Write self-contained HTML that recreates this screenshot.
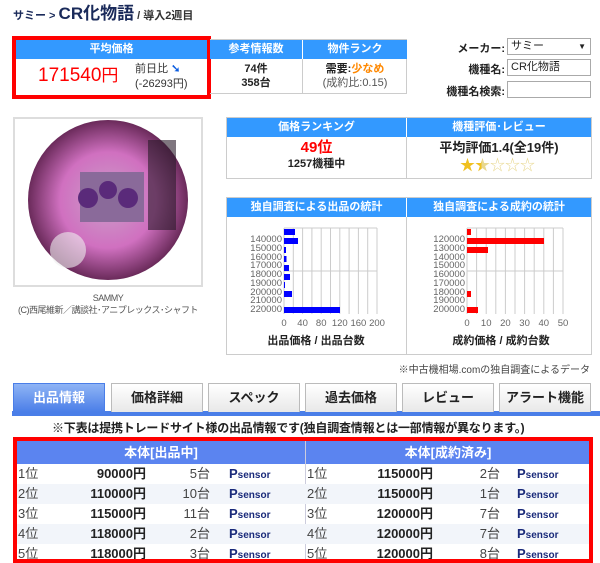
<!DOCTYPE html>
<html><head><meta charset="utf-8"><style>
*{margin:0;padding:0;box-sizing:border-box}
body{width:600px;height:563px;background:#fff;font-family:"Liberation Sans","Noto Sans CJK JP",sans-serif;position:relative;overflow:hidden;color:#222}
.a{position:absolute}
.hd{background:#3399ff;color:#fff;font-weight:bold;font-size:11px;text-align:center;line-height:19px}
.bx{border:1px solid #ccc}
.c{text-align:center}
.lab{position:absolute;font-size:11px;font-weight:bold;text-align:right;width:100px}
.sel{position:absolute;left:507px;width:84px;height:17px;border:1px solid #aaa;font-size:11px;padding-left:3px;line-height:15px;background:#fff}
.tab{position:absolute;top:383px;height:29px;width:92px;border:1px solid #bbb;border-bottom:none;background:linear-gradient(#fff,#e8e8e8);font-size:13px;font-weight:bold;text-align:center;line-height:28px;color:#222}
.row{position:absolute;left:0;width:577px;height:20px;font-size:13px;line-height:20px}
.row span{position:absolute}
.r{color:#444}
.p{font-weight:bold;text-align:right;width:110px}
.n{text-align:right;width:40px;color:#444}
.ps{font-weight:bold;color:#1a2a7a;font-size:13px}
.ps small{font-size:10px}
</style></head><body>
<div class="a" style="left:13px;top:4px;font-size:11px;font-weight:bold;color:#1a2a5a;line-height:20px">サミー &gt; <span style="font-size:17px">CR化物語</span> <span style="color:#333">/ 導入2週目</span></div>

<div class="a" style="left:12px;top:36px;width:199px;height:63px;border:4px solid #f00"></div>
<div class="a hd" style="left:16px;top:40px;width:191px">平均価格</div>
<div class="a" style="left:38px;top:64px;font-size:19px;color:#f00;line-height:24px">171540<span style="font-size:17px">円</span></div>
<div class="a" style="left:135px;top:62px;font-size:11px;color:#333;line-height:15px">前日比 <span style="color:#0a5ce0;font-weight:bold">➘</span><br>(-26293円)</div>

<div class="a bx" style="left:210px;top:39px;width:197px;height:55px;border-left:none"></div>
<div class="a hd" style="left:210px;top:40px;width:92px">参考情報数</div>
<div class="a hd" style="left:303px;top:40px;width:104px">物件ランク</div>
<div class="a" style="left:302px;top:59px;width:1px;height:35px;background:#ccc"></div>
<div class="a c" style="left:210px;top:62px;width:92px;font-size:11px;font-weight:bold;line-height:14px">74件<br>358台</div>
<div class="a c" style="left:303px;top:62px;width:104px;font-size:11px;line-height:14px"><b>需要:<span style="color:#f80">少なめ</span></b><br><span style="color:#555">(成約比:0.15)</span></div>

<div class="lab" style="left:405px;top:40px">メーカー:</div>
<div class="sel" style="top:38px">サミー<span style="position:absolute;right:4px;font-size:8px">▼</span></div>
<div class="lab" style="left:405px;top:61px">機種名:</div>
<div class="sel" style="top:59px">CR化物語</div>
<div class="lab" style="left:405px;top:83px">機種名検索:</div>
<div class="sel" style="top:81px"></div>

<div class="a" style="left:13px;top:117px;width:190px;height:170px;border:2px solid #ddd"></div>
<svg class="a" style="left:28px;top:120px" width="164" height="164"><defs><radialGradient id="g"><stop offset="0" stop-color="#c9a0c8"/><stop offset=".6" stop-color="#d070c0"/><stop offset="1" stop-color="#6a2a5a"/></radialGradient></defs><circle cx="80" cy="80" r="80" fill="url(#g)"/><rect x="52" y="52" width="64" height="50" fill="#8a6a9a"/><circle cx="60" cy="78" r="10" fill="#5a2a7a"/><circle cx="100" cy="78" r="10" fill="#5a2a7a"/><circle cx="80" cy="70" r="9" fill="#5a2a7a"/><rect x="120" y="20" width="28" height="90" fill="#2a1a2a" opacity=".6"/><circle cx="40" cy="130" r="18" fill="#eee" opacity=".6"/></svg>
<div class="a c" style="left:3px;top:292px;width:210px;font-size:9px;color:#555;line-height:12px;white-space:nowrap;letter-spacing:-0.5px">SAMMY<br>(C)西尾維新／講談社･アニプレックス･シャフト</div>

<div class="a bx" style="left:226px;top:117px;width:366px;height:62px"></div>
<div class="a hd" style="left:227px;top:118px;width:179px">価格ランキング</div>
<div class="a hd" style="left:407px;top:118px;width:184px">機種評価･レビュー</div>
<div class="a" style="left:406px;top:137px;width:1px;height:41px;background:#ccc"></div>
<div class="a c" style="left:227px;top:139px;width:179px;font-size:15px;font-weight:bold;color:#f00;line-height:18px">49位</div>
<div class="a c" style="left:227px;top:157px;width:179px;font-size:11px;font-weight:bold;line-height:14px">1257機種中</div>
<div class="a c" style="left:407px;top:139px;width:184px;font-size:13px;font-weight:bold;line-height:18px">平均評価1.4(全19件)</div>
<div class="a" style="left:460px;top:157px;font-size:15px;color:#e8d890;line-height:17px"><span style="color:#f0c020">★</span><span style="background:linear-gradient(90deg,#f0c020 45%,#e8d890 45%);-webkit-background-clip:text;color:transparent">★</span>☆☆☆</div>

<div class="a bx" style="left:226px;top:197px;width:366px;height:158px"></div>
<div class="a hd" style="left:227px;top:198px;width:179px">独自調査による出品の統計</div>
<div class="a hd" style="left:407px;top:198px;width:184px">独自調査による成約の統計</div>
<div class="a" style="left:406px;top:217px;width:1px;height:137px;background:#ccc"></div>
<svg class="a" style="left:226px;top:220px" width="366" height="130" font-family="Liberation Sans" font-size="9.5" fill="#666">
<g stroke="#ccc" stroke-width="1">
<line x1="58" y1="8" x2="58" y2="94"/><line x1="67.3" y1="8" x2="67.3" y2="94"/><line x1="76.6" y1="8" x2="76.6" y2="94"/><line x1="85.9" y1="8" x2="85.9" y2="94"/><line x1="95.2" y1="8" x2="95.2" y2="94"/><line x1="104.5" y1="8" x2="104.5" y2="94"/><line x1="113.8" y1="8" x2="113.8" y2="94"/><line x1="123.1" y1="8" x2="123.1" y2="94"/><line x1="132.4" y1="8" x2="132.4" y2="94"/><line x1="141.7" y1="8" x2="141.7" y2="94"/><line x1="151" y1="8" x2="151" y2="94"/><line x1="58" y1="51" x2="151" y2="51"/><line x1="58" y1="8" x2="151" y2="8"/>
<line x1="241" y1="8" x2="241" y2="94"/><line x1="250.6" y1="8" x2="250.6" y2="94"/><line x1="260.2" y1="8" x2="260.2" y2="94"/><line x1="269.8" y1="8" x2="269.8" y2="94"/><line x1="279.4" y1="8" x2="279.4" y2="94"/><line x1="289" y1="8" x2="289" y2="94"/><line x1="298.6" y1="8" x2="298.6" y2="94"/><line x1="308.2" y1="8" x2="308.2" y2="94"/><line x1="317.8" y1="8" x2="317.8" y2="94"/><line x1="327.4" y1="8" x2="327.4" y2="94"/><line x1="337" y1="8" x2="337" y2="94"/><line x1="241" y1="51" x2="337" y2="51"/><line x1="241" y1="8" x2="337" y2="8"/>
</g>
<g fill="#00f"><rect x="58" y="9" width="11" height="6"/><rect x="58" y="18" width="14" height="6"/><rect x="58" y="27" width="2" height="6"/><rect x="58" y="36" width="2.5" height="6"/><rect x="58" y="45" width="5" height="6"/><rect x="58" y="54" width="6" height="6"/><rect x="58" y="62" width="1" height="6"/><rect x="58" y="71" width="8" height="6"/><rect x="58" y="87" width="56" height="6"/></g>
<g fill="#f00"><rect x="241" y="9" width="4" height="6"/><rect x="241" y="18" width="77" height="6"/><rect x="241" y="27" width="21" height="6"/><rect x="241" y="71" width="4" height="6"/><rect x="241" y="87" width="11" height="6"/></g>
<g text-anchor="end"><text x="56" y="22">140000</text><text x="56" y="31">150000</text><text x="56" y="40">160000</text><text x="56" y="48">170000</text><text x="56" y="57">180000</text><text x="56" y="66">190000</text><text x="56" y="75">200000</text><text x="56" y="83">210000</text><text x="56" y="92">220000</text>
<text x="239" y="22">120000</text><text x="239" y="31">130000</text><text x="239" y="40">140000</text><text x="239" y="48">150000</text><text x="239" y="57">160000</text><text x="239" y="66">170000</text><text x="239" y="75">180000</text><text x="239" y="83">190000</text><text x="239" y="92">200000</text></g>
<g text-anchor="middle"><text x="58" y="106">0</text><text x="76.6" y="106">40</text><text x="95.2" y="106">80</text><text x="113.8" y="106">120</text><text x="132.4" y="106">160</text><text x="151" y="106">200</text>
<text x="241" y="106">0</text><text x="260.2" y="106">10</text><text x="279.4" y="106">20</text><text x="298.6" y="106">30</text><text x="317.8" y="106">40</text><text x="337" y="106">50</text></g>
<g text-anchor="middle" font-family="Liberation Sans,Noto Sans CJK JP" font-size="11" font-weight="bold" fill="#222"><text x="90" y="124">出品価格 / 出品台数</text><text x="275" y="124">成約価格 / 成約台数</text></g>
</svg>
<div class="a" style="right:10px;top:361px;font-size:10px;color:#444">※中古機相場.comの独自調査によるデータ</div>

<div class="a" style="left:12px;top:411px;width:588px;height:5px;background:#4a7ee8"></div>
<div class="tab" style="left:13px;background:linear-gradient(#8fb4f5,#4a7ee8);color:#fff;border-color:#4a7ee8">出品情報</div>
<div class="tab" style="left:111px">価格詳細</div>
<div class="tab" style="left:208px">スペック</div>
<div class="tab" style="left:305px">過去価格</div>
<div class="tab" style="left:402px">レビュー</div>
<div class="tab" style="left:499px">アラート機能</div>

<div class="a" style="left:52px;top:421px;font-size:12px;font-weight:bold;color:#222;line-height:14px;white-space:nowrap;letter-spacing:-0.2px">※下表は提携トレードサイト様の出品情報です(独自調査情報とは一部情報が異なります。)</div>
<div class="a" style="left:13px;top:437px;width:580px;height:126px;border:4px solid #f00;overflow:hidden">
<div class="a" style="left:0;top:0;width:572px;height:23px;background:#5b84f0;color:#fff;font-weight:bold;font-size:13px;line-height:23px"><span class="a c" style="left:0;width:288px">本体[出品中]</span><span class="a c" style="left:289px;width:284px">本体[成約済み]</span></div>
<div class="a" style="left:288px;top:0;width:1px;height:130px;background:#ccd"></div>
<div class="row" style="top:23px"><span class="r" style="left:1px">1位</span><span class="p" style="left:19px">90000円</span><span class="n" style="left:153px">5台</span><span class="ps" style="left:212px">P<small>sensor</small></span><span class="r" style="left:290px">1位</span><span class="p" style="left:306px">115000円</span><span class="n" style="left:443px">2台</span><span class="ps" style="left:500px">P<small>sensor</small></span></div>
<div class="row" style="top:43px;background:#f2f5fa"><span class="r" style="left:1px">2位</span><span class="p" style="left:19px">110000円</span><span class="n" style="left:153px">10台</span><span class="ps" style="left:212px">P<small>sensor</small></span><span class="r" style="left:290px">2位</span><span class="p" style="left:306px">115000円</span><span class="n" style="left:443px">1台</span><span class="ps" style="left:500px">P<small>sensor</small></span></div>
<div class="row" style="top:63px"><span class="r" style="left:1px">3位</span><span class="p" style="left:19px">115000円</span><span class="n" style="left:153px">11台</span><span class="ps" style="left:212px">P<small>sensor</small></span><span class="r" style="left:290px">3位</span><span class="p" style="left:306px">120000円</span><span class="n" style="left:443px">7台</span><span class="ps" style="left:500px">P<small>sensor</small></span></div>
<div class="row" style="top:83px;background:#f2f5fa"><span class="r" style="left:1px">4位</span><span class="p" style="left:19px">118000円</span><span class="n" style="left:153px">2台</span><span class="ps" style="left:212px">P<small>sensor</small></span><span class="r" style="left:290px">4位</span><span class="p" style="left:306px">120000円</span><span class="n" style="left:443px">7台</span><span class="ps" style="left:500px">P<small>sensor</small></span></div>
<div class="row" style="top:103px"><span class="r" style="left:1px">5位</span><span class="p" style="left:19px">118000円</span><span class="n" style="left:153px">3台</span><span class="ps" style="left:212px">P<small>sensor</small></span><span class="r" style="left:290px">5位</span><span class="p" style="left:306px">120000円</span><span class="n" style="left:443px">8台</span><span class="ps" style="left:500px">P<small>sensor</small></span></div>
</div>
</body></html>
